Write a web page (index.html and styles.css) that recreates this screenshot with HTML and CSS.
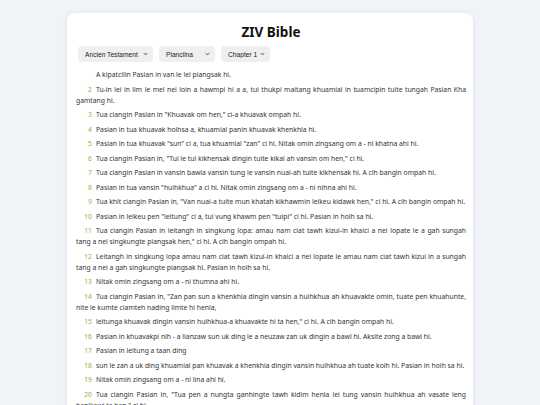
FILE: index.html
```html
<!DOCTYPE html>
<html lang="en">
<head>
<meta charset="utf-8">
<title>ZIV Bible</title>
<link rel="stylesheet" href="styles.css">
</head>
<body>
<main class="card">
  <h1 class="title">ZIV Bible</h1>
  <div class="controls">
    <select class="sel sel-testament"><option>Ancien Testament</option></select>
    <select class="sel sel-book"><option>Piancilna</option></select>
    <select class="sel sel-chapter"><option>Chapter 1</option></select>
  </div>
  <div class="verses">
    <p class="verse"><span class="num"></span>A kipatcilin Pasian in van le lei piangsak hi.</p>
    <p class="verse"><span class="num">2</span>Tu-in lei in lim le mel nei loin a hawmpi hi a a, tui thukpi maitang khuamial in tuamcipin tuite tungah Pasian Kha gamtang hi.</p>
    <p class="verse"><span class="num">3</span>Tua ciangin Pasian in "Khuavak om hen," ci-a khuavak ompah hi.</p>
    <p class="verse"><span class="num">4</span>Pasian in tua khuavak hoihsa a, khuamial panin khuavak khenkhia hi.</p>
    <p class="verse"><span class="num">5</span>Pasian in tua khuavak "sun" ci a, tua khuamial "zan" ci hi. Nitak omin zingsang om a - ni khatna ahi hi.</p>
    <p class="verse"><span class="num">6</span>Tua ciangin Pasian in, "Tui le tui kikhensak dingin tuite kikal ah vansin om hen," ci hi.</p>
    <p class="verse"><span class="num">7</span>Tua ciangin Pasian in vansin bawla vansin tung le vansin nuai-ah tuite kikhensak hi. A cih bangin ompah hi.</p>
    <p class="verse"><span class="num">8</span>Pasian in tua vansin "huihkhua" a ci hi. Nitak omin zingsang om a - ni nihna ahi hi.</p>
    <p class="verse"><span class="num">9</span>Tua khit ciangin Pasian in, "Van nuai-a tuite mun khatah kikhawmin leikeu kidawk hen," ci hi. A cih bangin ompah hi.</p>
    <p class="verse"><span class="num">10</span>Pasian in leikeu pen "leitung" ci a, tui vung khawm pen "tuipi" ci hi. Pasian in hoih sa hi.</p>
    <p class="verse"><span class="num">11</span>Tua ciangin Pasian in leitangh in singkung lopa: amau nam ciat tawh kizui-in khaici a nei lopate le a gah sungah tang&nbsp;a nei singkungte piangsak hen," ci hi. A cih bangin ompah hi.</p>
    <p class="verse"><span class="num">12</span>Leitangh in singkung lopa amau nam ciat tawh kizui-in khaici a nei lopate le amau nam ciat tawh kizui in a sungah tang a nei a gah singkungte piangsak hi. Pasian in hoih sa hi.</p>
    <p class="verse"><span class="num">13</span>Nitak omin zingsang om a - ni thumna ahi hi.</p>
    <p class="verse"><span class="num">14</span>Tua ciangin Pasian in, "Zan pan sun a khenkhia dingin vansin a huihkhua ah khuavakte omin, tuate pen khuahunte, nite le kumte ciamteh nading limte hi henla,</p>
    <p class="verse"><span class="num">15</span>leitunga khuavak dingin vansin huihkhua-a khuavakte hi ta hen," ci hi. A cih bangin ompah hi.</p>
    <p class="verse"><span class="num">16</span>Pasian in khuavakpi nih - a lianzaw sun uk ding le a neuzaw zan uk dingin a bawl hi. Aksite zong a bawl hi.</p>
    <p class="verse"><span class="num">17</span>Pasian in leitung a taan ding</p>
    <p class="verse"><span class="num">18</span>sun le zan a uk ding khuamial pan khuavak a khenkhia dingin vansin huihkhua ah tuate koih hi. Pasian in hoih sa hi.</p>
    <p class="verse"><span class="num">19</span>Nitak omin zingsang om a - ni lina ahi hi.</p>
    <p class="verse"><span class="num">20</span>Tua ciangin Pasian in, "Tua pen a nungta ganhingte tawh kidim henla lei tung vansin huihkhua ah vasate leng hanikawi ta hen," ci hi.</p>
  </div>
</main>
</body>
</html>
```
FILE: styles.css
```css
html, body {
  margin: 0;
  padding: 0;
}
body {
  background: #f0f4f8;
  font-family: "Noto Sans", "Open Sans", sans-serif;
  color: #333;
}
.card {
  box-sizing: border-box;
  width: 406px;
  margin: 13px auto 0;
  padding: 10px 7px 20px 9px;
  background: #fff;
  border-radius: 8px;
  box-shadow: 0 1px 6px rgba(0, 0, 0, 0.08);
}
.title {
  margin: 0;
  font-size: 13.5px;
  line-height: 19px;
  font-weight: 700;
  text-align: center;
  color: #111;
}
.controls {
  display: flex;
  gap: 6px;
  margin: 4px 0 0 2px;
}
.sel {
  -webkit-appearance: none;
  appearance: none;
  height: 16px;
  padding: 0 10px 0 7px;
  border: none;
  border-radius: 4px;
  background-color: #efefef;
  background-image: url("data:image/svg+xml,%3Csvg xmlns='http://www.w3.org/2000/svg' width='6' height='4' viewBox='0 0 6 4'%3E%3Cpath d='M1 1l2 2 2-2' fill='none' stroke='%23333' stroke-width='1.1'/%3E%3C/svg%3E");
  background-repeat: no-repeat;
  background-position: right 5px center;
  background-size: 5px 4px;
  font-family: "Liberation Sans", Arial, sans-serif;
  font-size: 6.67px;
  color: #222;
}
.sel-testament { width: 75px; }
.sel-book { width: 56px; }
.sel-chapter { width: 49px; }
.verses {
  margin-top: 7px;
}
.verse {
  margin: 0 0 3.5px;
  font-size: 6.8px;
  line-height: 11px;
  text-align: justify;
  color: #333;
}
.num {
  display: inline-block;
  width: 16px;
  margin-right: 4px;
  text-align: right;
  color: #b59f3b;
}
```
